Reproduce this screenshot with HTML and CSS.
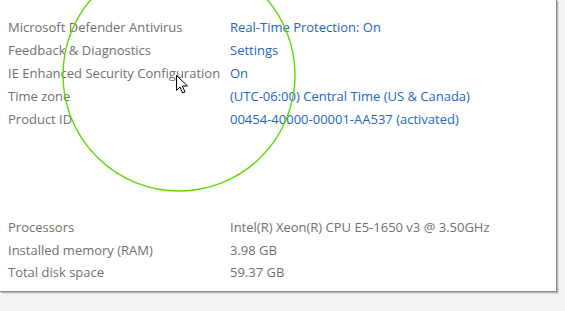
FILE: index.html
```html
<!DOCTYPE html>
<html>
<head>
<meta charset="utf-8">
<link rel="stylesheet" href="styles.css">
</head>
<body>
<div class="panel">
  <div class="group">
    <div class="label">Microsoft Defender Antivirus</div><div class="value link">Real-Time Protection: On</div>
    <div class="label">Feedback &amp; Diagnostics</div><div class="value link">Settings</div>
    <div class="label">IE Enhanced Security Configuration</div><div class="value link">On</div>
    <div class="label">Time zone</div><div class="value link">(UTC-06:00) Central Time (US &amp; Canada)</div>
    <div class="label">Product ID</div><div class="value link">00454-40000-00001-AA537 (activated)</div>
  </div>
  <div class="group second">
    <div class="label">Processors</div><div class="value">Intel(R) Xeon(R) CPU E5-1650 v3 @ 3.50GHz</div>
    <div class="label">Installed memory (RAM)</div><div class="value">3.98 GB</div>
    <div class="label">Total disk space</div><div class="value">59.37 GB</div>
  </div>
</div>
<svg class="ring" width="565" height="311" viewBox="0 0 565 311">
  <circle cx="179" cy="75" r="116" fill="none" stroke="#5fd80a" stroke-width="1.4"/>
</svg>
<svg class="cursor" width="14" height="20" viewBox="0 0 14 20">
  <path d="M0.5 0.5 L0.5 15.5 L4 12 L6.6 18 L9 17 L6.4 11 L11.5 11 Z" fill="#fff" stroke="#000" stroke-width="1" stroke-linejoin="miter"/>
</svg>
</body>
</html>
```
FILE: styles.css
```css
html, body {
  margin: 0;
  padding: 0;
}
body {
  background: #f4f4f4;
  width: 565px;
  height: 311px;
  overflow: hidden;
  position: relative;
  font-family: "Open Sans", "Noto Sans", sans-serif;
  font-size: 13px;
}
.panel {
  box-sizing: border-box;
  width: 557px;
  height: 292px;
  background: #fff;
  border-right: 1px solid #8a8a8a;
  border-bottom: 1px solid #8a8a8a;
  box-shadow: 1px 1px 0 #b8b8b8, 2px 2px 0 #dcdcdc;
  padding: 15px 0 0 8px;
}
.group {
  display: grid;
  grid-template-columns: 222px auto;
  grid-auto-rows: 23px;
  align-items: center;
}
.second {
  margin-top: 86px;
  grid-auto-rows: 22.5px;
}
.label {
  color: #707070;
  white-space: nowrap;
}
.value {
  color: #707070;
  white-space: nowrap;
}
.link {
  color: #2266c4;
}
.ring {
  position: absolute;
  left: 0;
  top: 0;
  pointer-events: none;
}
.cursor {
  position: absolute;
  left: 176px;
  top: 75px;
}
```
